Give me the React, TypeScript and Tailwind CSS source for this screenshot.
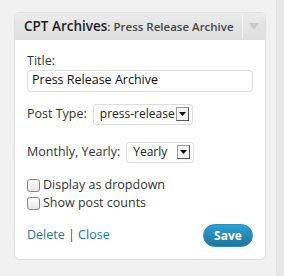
const font = { fontFamily: '"Open Sans", "Liberation Sans", sans-serif' };

const Select = ({ value, width }: { value: string; width: string }) => (
  <div className={`flex items-center h-[21px] ${width} rounded-[3px] border border-[#dcdcdc] bg-white pl-[6px] pr-[3px]`}>
    <span className="flex-1 text-[12px] text-[#222] leading-none whitespace-nowrap">{value}</span>
    <span className="flex items-center justify-center w-[13px] h-[14px] border border-[#9a9a9a] border-r-[#555] border-b-[#555] bg-[#f4f4f4]">
      <svg width="7" height="4" viewBox="0 0 7 4">
        <path d="M0 0h7L3.5 4z" fill="#111" />
      </svg>
    </span>
  </div>
);

const Checkbox = ({ label }: { label: string }) => (
  <label className="flex items-center gap-[3px] h-[18px] shrink-0 text-[12.5px] text-[#333]">
    <span className="w-[13px] h-[13px] rounded-[3px] border border-[#888] bg-gradient-to-b from-white to-[#e6e6e6]" />
    {label}
  </label>
);

export default function App() {
  return (
    <div className="w-[284px] h-[276px] flex bg-[#f1f1f1]" style={font}>
      <div className="flex-1 pt-[12px] pl-[14px] pr-[10px]">
        <div className="w-[252px] h-[248px] rounded-[6px] border border-[#dfdfdf] bg-white flex flex-col overflow-hidden">
          {/* header */}
          <div className="flex h-[27px] bg-gradient-to-b from-[#ececec] to-[#dedede] border-b border-[#dfdfdf]">
            <div className="flex-1 flex items-baseline pt-[7px] pl-[9px] leading-none whitespace-nowrap">
              <span className="font-semibold text-[13.5px] text-[#222]">CPT Archives</span>
              <span className="text-[#464646] text-[11.5px] font-semibold">: Press Release Archive</span>
            </div>
            <div className="w-[23px] flex items-center justify-center border-l border-[#f4f4f4]">
              <svg width="10" height="7" viewBox="0 0 10 7">
                <path d="M0 0h10L5 7z" fill="#c9c9c9" />
              </svg>
            </div>
          </div>

          {/* body */}
          <div className="flex-1 flex flex-col px-[12px] pt-[15px] text-[12.5px] text-[#333]">
            <div className="leading-none">Title:</div>
            <div className="mt-[2px] h-[22px] rounded-[4px] border border-[#dfdfdf] flex items-center pl-[4px] text-[12.5px] text-[#111]">
              Press Release Archive
            </div>

            <div className="mt-[12px] flex items-center gap-[6px]">
              <span>Post Type:</span>
              <Select value="press-release" width="w-[100px]" />
            </div>

            <div className="mt-[17px] flex items-center gap-[6px]">
              <span>Monthly, Yearly:</span>
              <Select value="Yearly" width="w-[68px]" />
            </div>

            <div className="mt-[14px] flex flex-col">
              <Checkbox label="Display as dropdown" />
              <Checkbox label="Show post counts" />
            </div>

            <div className="mt-auto mb-[12px] flex items-center justify-between">
              <div className="text-[12.5px] text-[#21759b]">
                Delete <span className="text-[#5b3a8c]">|</span> Close
              </div>
              <button className="w-[50px] h-[23px] rounded-[12px] bg-gradient-to-b from-[#2e9fd2] to-[#21759b] border border-[#298cba] text-white text-[12px] font-bold">
                Save
              </button>
            </div>
          </div>
        </div>
      </div>
      <div className="w-[8px] bg-[#e6e6e6] border-l border-[#e0e0e0]" />
    </div>
  );
}
